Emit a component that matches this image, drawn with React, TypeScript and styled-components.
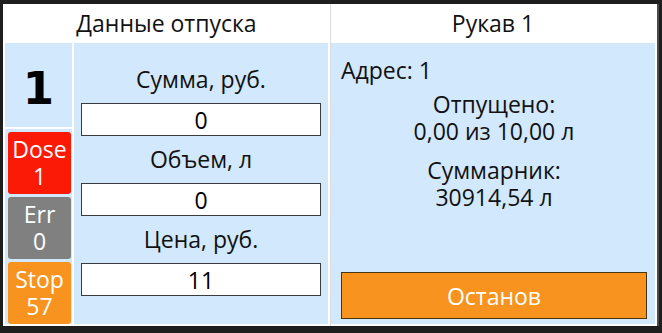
import styled, { createGlobalStyle } from "styled-components";

const GlobalStyle = createGlobalStyle`
  html, body {
    margin: 0;
    padding: 0;
    background: #1e1e1e;
  }

  body {
    font-family: "Open Sans", "Noto Sans", sans-serif;
    color: #111;
  }
`;

type Status = "dose" | "err" | "stop";

const statusColors: Record<Status, string> = {
  dose: "#fb1a05",
  err: "#808080",
  stop: "#f7931e",
};

const statuses: { kind: Status; label: string; value: number }[] = [
  { kind: "dose", label: "Dose", value: 1 },
  { kind: "err", label: "Err", value: 0 },
  { kind: "stop", label: "Stop", value: 57 },
];

const fields = [
  { label: "Сумма, руб.", value: "0" },
  { label: "Объем, л", value: "0" },
  { label: "Цена, руб.", value: "11" },
];

const App = () => {
  return (
    <>
      <GlobalStyle />
      <Frame>
        <Panel>
          <Section>
            <Header>Данные отпуска</Header>
            <OrderBody>
              <SideColumn>
                <NozzleNumber>1</NozzleNumber>
                <StatusList>
                  {statuses.map((s) => (
                    <StatusBadge key={s.kind} $kind={s.kind}>
                      <BadgeLine>{s.label}</BadgeLine>
                      <BadgeLine>{s.value}</BadgeLine>
                    </StatusBadge>
                  ))}
                </StatusList>
              </SideColumn>
              <FieldsColumn>
                {fields.map((f) => (
                  <FieldGroup key={f.label}>
                    <FieldLabel>{f.label}</FieldLabel>
                    <FieldInput readOnly value={f.value} />
                  </FieldGroup>
                ))}
              </FieldsColumn>
            </OrderBody>
          </Section>
          <Section $divided>
            <Header>Рукав 1</Header>
            <HoseBody>
              <Address>Адрес: 1</Address>
              <InfoBlock>
                <InfoLine>Отпущено:</InfoLine>
                <InfoLine>0,00 из 10,00 л</InfoLine>
              </InfoBlock>
              <InfoBlock>
                <InfoLine>Суммарник:</InfoLine>
                <InfoLine>30914,54 л</InfoLine>
              </InfoBlock>
              <StopButton>Останов</StopButton>
            </HoseBody>
          </Section>
        </Panel>
      </Frame>
    </>
  );
};

const Frame = styled.div`
  width: 662px;
  height: 333px;
  box-sizing: border-box;
  padding: 4px 3px 7px 3px;
`;

const Panel = styled.div`
  width: 654px;
  height: 322px;
  background: #ffffff;
  display: grid;
  grid-template-columns: 327px 327px;
  box-shadow: 2px 0 0 #4a4a4a;
`;

const Section = styled.div<{ $divided?: boolean }>`
  display: flex;
  flex-direction: column;
  min-height: 0;
  box-sizing: border-box;
  padding: ${(p) => (p.$divided ? "0 2px 2px 0" : "0 2px 2px 2px")};
  border-left: ${(p) => (p.$divided ? "1px solid #dcdcdc" : "none")};
`;

const Header = styled.div`
  height: 39px;
  line-height: 39px;
  text-align: center;
  font-size: 23px;
  color: #111;
  background: #ffffff;
`;

const OrderBody = styled.div`
  flex: 1;
  display: grid;
  grid-template-columns: 67px 1fr;
  gap: 2px;
`;

const SideColumn = styled.div`
  display: grid;
  grid-template-rows: 84px 1fr;
  gap: 2px;
`;

const NozzleNumber = styled.div`
  background: #d2e8fc;
  display: flex;
  align-items: center;
  justify-content: center;
  padding-top: 6px;
  box-sizing: border-box;
  font-family: "DejaVu Sans", "Open Sans", sans-serif;
  font-weight: bold;
  font-size: 45px;
  color: #000;
`;

const StatusList = styled.div`
  background: #d2e8fc;
  display: flex;
  flex-direction: column;
  gap: 3px;
  padding: 3px 1px 0 3px;
`;

const StatusBadge = styled.div<{ $kind: Status }>`
  flex: 1;
  display: flex;
  flex-direction: column;
  align-items: center;
  justify-content: center;
  border-radius: 3px;
  background: ${(p) => statusColors[p.$kind]};
  color: #fff;
`;

const BadgeLine = styled.span`
  font-size: 23px;
  line-height: 27px;
  height: 27px;
  overflow: visible;
`;

const FieldsColumn = styled.div`
  background: #d2e8fc;
  display: flex;
  flex-direction: column;
  padding: 13px 7px 0 7px;
`;

const FieldGroup = styled.div`
  display: flex;
  flex-direction: column;
`;

const FieldLabel = styled.div`
  height: 47px;
  line-height: 47px;
  text-align: center;
  font-size: 23px;
  color: #111;
`;

const FieldInput = styled.input`
  box-sizing: border-box;
  width: 100%;
  height: 33px;
  margin: 0;
  padding: 0;
  border: 1px solid #3c3c3c;
  background: #fff;
  outline: none;
  text-align: center;
  font-family: inherit;
  font-size: 23px;
  color: #000;
`;

const HoseBody = styled.div`
  flex: 1;
  background: #d2e8fc;
  display: flex;
  flex-direction: column;
  padding: 12px 8px 5px 10px;
`;

const Address = styled.div`
  line-height: 30px;
  font-size: 23px;
  color: #111;
`;

const InfoBlock = styled.div`
  margin-top: 6px;
  text-align: center;

  & + & {
    margin-top: 12px;
  }
`;

const InfoLine = styled.div`
  line-height: 27px;
  font-size: 23px;
  color: #111;
`;

const StopButton = styled.button`
  margin-top: auto;
  height: 47px;
  border: 1px solid #4a3410;
  background: #f7931e;
  color: #fff;
  font-family: inherit;
  font-size: 23px;
  padding: 0;

  &:hover {
    cursor: pointer;
  }
`;

export default App;
